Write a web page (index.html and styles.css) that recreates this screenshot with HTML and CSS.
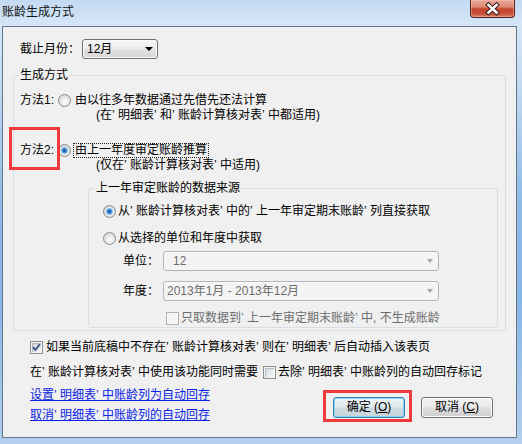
FILE: index.html
```html
<!DOCTYPE html>
<html lang="zh-CN">
<head>
<meta charset="utf-8">
<title>账龄生成方式</title>
<link rel="stylesheet" href="styles.css">
</head>
<body>
<div class="window">
  <div class="titlebar">
    <span class="title">账龄生成方式</span>
    <span class="close">
      <svg width="45" height="18" viewBox="0 0 45 18">
        <path d="M18.5 5 L26.5 12.5 M26.5 5 L18.5 12.5" stroke="#3a1a16" stroke-width="4.6" stroke-linecap="square" fill="none"/>
        <path d="M18.5 5 L26.5 12.5 M26.5 5 L18.5 12.5" stroke="#ffffff" stroke-width="2.6" stroke-linecap="square" fill="none"/>
      </svg>
    </span>
  </div>
  <div class="panel">
    <div class="month-row">
      <span class="month-label">截止月份：</span>
      <div class="combo enabled month-combo"><span class="combo-text">12月</span><span class="arrow"></span></div>
    </div>

    <fieldset class="group outer">
      <legend>生成方式</legend>
      <div class="method m1">
        <span class="mlabel">方法1:</span>
        <span class="radio"></span>
        <div class="mtext">
          <div class="l1">由以往多年数据通过先借先还法计算</div>
          <div class="l2">(在<span class="q">’</span>明细表<span class="q">’</span>和<span class="q">’</span>账龄计算核对表<span class="q">’</span>中都适用)</div>
        </div>
      </div>
      <div class="method m2">
        <span class="redbox redbox-method"></span>
        <span class="mlabel">方法2:</span>
        <span class="radio checked"></span>
        <div class="mtext">
          <div class="l1 focus">由上一年度审定账龄推算</div>
          <div class="l2">(仅在<span class="q">’</span>账龄计算核对表<span class="q">’</span>中适用)</div>
        </div>
      </div>

      <fieldset class="group inner">
        <legend>上一年审定账龄的数据来源</legend>
        <div class="opt opt1">
          <span class="radio checked"></span>
          <span class="opt-text">从<span class="q">’</span>账龄计算核对表<span class="q">’</span>中的<span class="q">’</span>上一年审定期末账龄<span class="q">’</span>列直接获取</span>
        </div>
        <div class="opt opt2">
          <span class="radio"></span>
          <span class="opt-text">从选择的单位和年度中获取</span>
        </div>
        <div class="field field1">
          <span class="flabel">单位：</span>
          <div class="combo disabled"><span class="combo-text unit-text">12</span><span class="arrow"></span></div>
        </div>
        <div class="field field2">
          <span class="flabel">年度：</span>
          <div class="combo disabled"><span class="combo-text">2013年1月 - 2013年12月</span><span class="arrow"></span></div>
        </div>
        <div class="chkrow only-row">
          <span class="chk off"></span>
          <span class="chk-text gray">只取数据到<span class="q">’</span>上一年审定期末账龄<span class="q">’</span>中, 不生成账龄</span>
        </div>
      </fieldset>
    </fieldset>

    <div class="chkrow insert-row">
      <span class="chk on">
        <svg width="11" height="11" viewBox="0 0 11 11"><path d="M2 5.2 L4.3 8 L9 2.2" stroke="#44588c" stroke-width="2" fill="none" stroke-linejoin="miter"/></svg>
      </span>
      <span class="chk-text">如果当前底稿中不存在<span class="q">’</span>账龄计算核对表<span class="q">’</span>则在<span class="q">’</span>明细表<span class="q">’</span>后自动插入该表页</span>
    </div>
    <div class="chkrow need-row">
      <span class="need-text">在<span class="q">’</span>账龄计算核对表<span class="q">’</span>中使用该功能同时需要</span>
      <span class="chk plain"></span>
      <span class="chk-text">去除<span class="q">’</span>明细表<span class="q">’</span>中账龄列的自动回存标记</span>
    </div>

    <div class="bottom">
      <div class="links">
        <a class="link">设置<span class="q">’</span>明细表<span class="q">’</span>中账龄列为自动回存</a>
        <a class="link">取消<span class="q">’</span>明细表<span class="q">’</span>中账龄列的自动回存</a>
      </div>
      <div class="buttons">
        <div class="btn-wrap">
          <span class="redbox redbox-btn"></span>
          <div class="btn default">确定 (<u>O</u>)</div>
        </div>
        <div class="btn">取消 (<u>C</u>)</div>
      </div>
    </div>
  </div>
</div>
</body>
</html>
```

FILE: styles.css
```css
* { box-sizing: border-box; }
html, body { margin: 0; padding: 0; }
body {
  width: 522px;
  height: 444px;
  overflow: hidden;
  font-family: "Liberation Sans", "Noto Sans CJK SC", sans-serif;
  font-size: 12px;
  color: #000;
}
.window {
  width: 522px;
  height: 444px;
  display: flex;
  flex-direction: column;
  background: linear-gradient(to bottom, #c3daf2 0, #d6e6f7 26px, #c4dbf2 80px, #8fbbe7 200px, #86b6e6 300px, #b3cfee 444px);
}
.titlebar {
  height: 26px;
  flex: none;
  display: flex;
  align-items: flex-start;
  padding-left: 2px;
}
.title {
  margin-top: 5px;
  line-height: 15px;
  color: #111;
}
.close {
  margin-left: auto;
  margin-right: 7px;
  width: 45px;
  height: 18px;
  border: 1px solid #5a2119;
  border-top: none;
  border-radius: 0 0 4px 4px;
  background: linear-gradient(to bottom, #eaa898 0, #dc8a76 40%, #c6472d 52%, #c44a31 75%, #d97a63 100%);
  box-shadow: inset 0 0 0 1px rgba(255, 200, 190, 0.45);
  display: flex;
  align-items: center;
  justify-content: center;
  overflow: hidden;
}
.close svg { display: block; flex: none; }

.panel {
  flex: 1;
  margin: 0 5px 6px 2px;
  border: 1px solid #62768c;
  background: #f0f0f0;
  padding-top: 12px;
}

.month-row {
  display: flex;
  align-items: center;
  height: 20px;
  margin-left: 17px;
}
.month-label { width: 62px; line-height: 15px; }

.combo {
  height: 20px;
  display: flex;
  align-items: center;
  border-radius: 3px;
  padding-left: 3px;
}
.combo-text { line-height: 15px; white-space: nowrap; }
.month-combo { width: 76px; }
.combo.enabled {
  border: 1px solid #707070;
  background: linear-gradient(to bottom, #f6f6f6 0, #ececec 48%, #e2e2e2 52%, #d6d6d6 100%);
  box-shadow: inset 0 0 0 1px #fbfbfb;
}
.month-combo .combo-text { margin-left: 1px; }
.arrow {
  margin-left: auto;
  margin-right: 4px;
  width: 0;
  height: 0;
  border-left: 4px solid transparent;
  border-right: 4px solid transparent;
  border-top: 4px solid #000;
}
.combo.disabled {
  width: 276px;
  border: 1px solid #b3b6b8;
  background: #f4f4f4;
  box-shadow: inset 0 1px 0 #fcfcfc;
  color: #6d6d6d;
}
.combo.disabled .arrow {
  border-top-color: #a6a6a6;
  border-left-width: 3.5px;
  border-right-width: 3.5px;
  margin-right: 5px;
}
.unit-text { margin-left: 6px; }

fieldset.group {
  min-width: 0;
  border: 1px solid #d5dfe5;
  border-radius: 3px;
}
fieldset.group > legend {
  padding: 0 1px;
  line-height: 16px;
}
fieldset.outer {
  margin: 8px 0 0 10px;
  width: 493px;
  padding: 0 0 2px 5px;
}

.method {
  position: relative;
  display: flex;
  align-items: flex-start;
  padding-left: 1px;
}
.m1 { margin-top: 10px; }
.m2 { margin-top: 20px; }
.mlabel { width: 38px; line-height: 15px; flex: none; }
.mtext { margin-left: 2px; }
.l1 {
  display: inline-block;
  border: 1px dotted transparent;
  padding: 0 1px;
  line-height: 13px;
}
.l1.focus { border-color: #222; }
.l2 { line-height: 15px; padding-left: 23px; }

.redbox {
  position: absolute;
  border: 3px solid #ee3a3a;
  pointer-events: none;
}
.redbox-method {
  left: -10px;
  top: -16px;
  width: 51px;
  height: 43px;
}

.radio {
  flex: none;
  width: 13px;
  height: 13px;
  margin-top: 1px;
  border-radius: 50%;
  border: 1px solid #8c8c8c;
  background: radial-gradient(circle at 55% 60%, #fbfbfb 0, #eeeeee 35%, #d4d4d4 75%, #c2c2c2 100%);
}
.radio.checked {
  background:
    radial-gradient(circle at 50% 50%, #1c4f96 0, #2f74c2 1.5px, #6db4ec 2.8px, rgba(140,200,240,0.6) 3.4px, rgba(255,255,255,0) 3.8px),
    radial-gradient(circle at 55% 60%, #fbfbfb 0, #eeeeee 35%, #d4d4d4 75%, #c2c2c2 100%);
}

fieldset.inner {
  margin: 7px 0 0 69px;
  width: 410px;
  padding: 0 0 1px 6px;
}
.opt {
  display: flex;
  align-items: flex-start;
  margin-left: 8px;
  line-height: 15px;
}
.opt-text { margin-left: 2px; white-space: nowrap; }
.opt1 { margin-top: 8px; }
.opt2 { margin-top: 12px; }

.field {
  display: flex;
  align-items: center;
  height: 20px;
  margin-left: 28px;
}
.field1 { margin-top: 5px; }
.field2 { margin-top: 10px; }
.flabel { width: 40px; line-height: 15px; flex: none; }

.chkrow {
  display: flex;
  align-items: flex-start;
  line-height: 15px;
  white-space: nowrap;
}
.only-row { margin: 10px 0 0 71px; }
.only-row .chk-text { margin-left: 2px; }
.gray { color: #6d6d6d; }

.chk {
  flex: none;
  width: 13px;
  height: 13px;
  margin-top: 1px;
  border: 1px solid #8e8f8f;
  background: linear-gradient(135deg, #d0d4d9 0, #e6e8ea 50%, #f8f8f8 100%);
  box-shadow: inset 0 0 0 1px #f4f4f4, inset 1px 1px 1px 1px #b4b9be;
  display: flex;
  align-items: center;
  justify-content: center;
}
.chk svg { display: block; }
.chk.off {
  border-color: #b1b1b1;
  background: #f4f4f4;
  box-shadow: inset 0 0 0 1px #f8f8f8;
}

.insert-row { margin: 9px 0 0 27px; }
.insert-row .chk-text { margin-left: 3px; }
.need-row { margin: 10px 0 0 27px; }
.need-row .chk { margin-left: 5px; }
.need-row .chk-text { margin-left: 2px; }

.q {
  letter-spacing: 3.3px;
  font-family: "Liberation Sans", sans-serif;
}

.bottom {
  display: flex;
  align-items: flex-start;
  margin-top: 8px;
  padding-left: 27px;
}
.links {
  display: flex;
  flex-direction: column;
  gap: 5px;
  line-height: 15px;
}
.link {
  color: #0a24e6;
  text-decoration: underline;
  white-space: nowrap;
}
.buttons {
  margin-left: auto;
  margin-right: 23px;
  margin-top: 9px;
  display: flex;
  gap: 16px;
}
.btn-wrap { position: relative; }
.redbox-btn {
  left: -10px;
  top: -7px;
  width: 89px;
  height: 32px;
}
.btn {
  width: 72px;
  height: 21px;
  border: 1px solid #707070;
  border-radius: 3px;
  background: linear-gradient(to bottom, #f4f4f4 0, #ebebeb 45%, #dddddd 52%, #cfcfcf 100%);
  box-shadow: inset 0 0 0 1px #fbfbfb;
  display: flex;
  align-items: center;
  justify-content: center;
  line-height: 15px;
  white-space: pre;
}
.btn.default {
  border-color: #3c7fb1;
  background: linear-gradient(to bottom, #eef4f7 0, #e1e9ee 45%, #d2dde3 52%, #c6d4dc 100%);
  box-shadow: inset 0 0 0 1px #7fd6f6;
}
u { text-decoration: underline; }
```
